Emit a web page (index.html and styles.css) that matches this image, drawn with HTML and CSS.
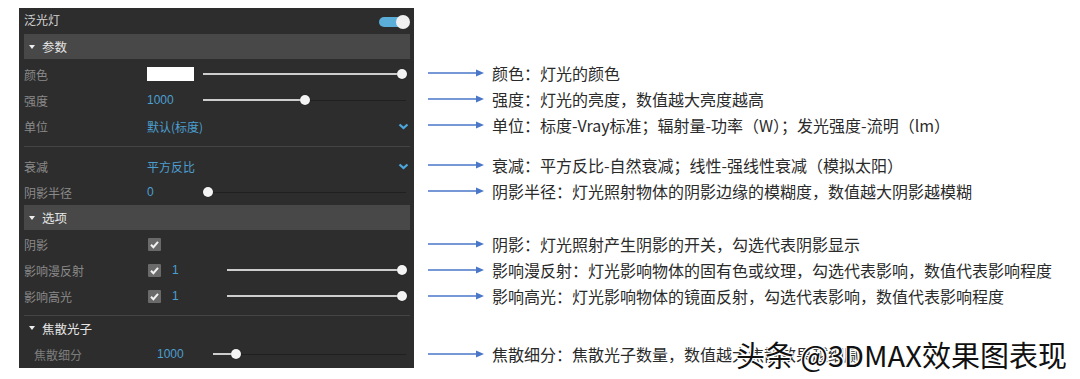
FILE: index.html
```html
<!DOCTYPE html>
<html lang="zh">
<head>
<meta charset="utf-8">
<link rel="stylesheet" href="styles.css">
</head>
<body>
<div class="page">
  <div class="panel">
    <div class="title-row">
      <span class="title">泛光灯</span>
      <span class="toggle"><span class="toggle-thumb"></span></span>
    </div>

    <div class="section-head"><span class="tri"></span>参数</div>
    <div class="rows first">
      <div class="row">
        <span class="label">颜色</span>
        <span class="swatch"></span>
        <div class="slider"><span class="fill" style="width:199px"></span><span class="thumb"></span><span class="rest"></span></div>
      </div>
      <div class="row">
        <span class="label">强度</span>
        <span class="value">1000</span>
        <div class="slider"><span class="fill" style="width:102px"></span><span class="thumb"></span><span class="rest"></span></div>
      </div>
      <div class="row">
        <span class="label">单位</span>
        <span class="value grow">默认(标度)</span>
        <svg class="chev" width="11" height="7" viewBox="0 0 11 7"><polyline points="1.5,1.5 5.5,5 9.5,1.5" fill="none" stroke="#4ba7dc" stroke-width="2.3"/></svg>
      </div>
      <div class="sep top"></div>
      <div class="row">
        <span class="label">衰减</span>
        <span class="value grow">平方反比</span>
        <svg class="chev" width="11" height="7" viewBox="0 0 11 7"><polyline points="1.5,1.5 5.5,5 9.5,1.5" fill="none" stroke="#4ba7dc" stroke-width="2.3"/></svg>
      </div>
      <div class="row">
        <span class="label">阴影半径</span>
        <span class="value">0</span>
        <div class="slider"><span class="fill" style="width:5px"></span><span class="thumb"></span><span class="rest"></span></div>
      </div>
    </div>

    <div class="section-head"><span class="tri"></span>选项</div>
    <div class="rows second">
      <div class="row">
        <span class="label">阴影</span>
        <span class="check"><svg width="13" height="13" viewBox="0 0 13 13"><polyline points="3,6.8 5.4,9.2 10,3.8" fill="none" stroke="#f2f2f2" stroke-width="2"/></svg></span>
      </div>
      <div class="row">
        <span class="label">影响漫反射</span>
        <span class="check"><svg width="13" height="13" viewBox="0 0 13 13"><polyline points="3,6.8 5.4,9.2 10,3.8" fill="none" stroke="#f2f2f2" stroke-width="2"/></svg></span>
        <span class="value short">1</span>
        <div class="slider"><span class="fill" style="width:175px"></span><span class="thumb"></span><span class="rest"></span></div>
      </div>
      <div class="row">
        <span class="label">影响高光</span>
        <span class="check"><svg width="13" height="13" viewBox="0 0 13 13"><polyline points="3,6.8 5.4,9.2 10,3.8" fill="none" stroke="#f2f2f2" stroke-width="2"/></svg></span>
        <span class="value short">1</span>
        <div class="slider"><span class="fill" style="width:175px"></span><span class="thumb"></span><span class="rest"></span></div>
      </div>
      <div class="sep bottom"></div>
    </div>

    <div class="section-head plain"><span class="tri"></span>焦散光子</div>
    <div class="rows third">
      <div class="row">
        <span class="label">焦散细分</span>
        <span class="value">1000</span>
        <div class="slider"><span class="fill" style="width:23px"></span><span class="thumb"></span><span class="rest"></span></div>
      </div>
    </div>
  </div>

  <div class="notes">
    <div class="note"><svg class="arrow" width="56" height="10" viewBox="0 0 56 10"><line x1="0" y1="5" x2="50" y2="5" stroke="#4a76c8" stroke-width="1.3"/><polygon points="48,1.5 56,5 48,8.5" fill="#4a76c8"/></svg><span>颜色：灯光的颜色</span></div>
    <div class="note"><svg class="arrow" width="56" height="10" viewBox="0 0 56 10"><line x1="0" y1="5" x2="50" y2="5" stroke="#4a76c8" stroke-width="1.3"/><polygon points="48,1.5 56,5 48,8.5" fill="#4a76c8"/></svg><span>强度：灯光的亮度，数值越大亮度越高</span></div>
    <div class="note"><svg class="arrow" width="56" height="10" viewBox="0 0 56 10"><line x1="0" y1="5" x2="50" y2="5" stroke="#4a76c8" stroke-width="1.3"/><polygon points="48,1.5 56,5 48,8.5" fill="#4a76c8"/></svg><span>单位：标度-Vray标准；辐射量-功率（W）；发光强度-流明（lm）</span></div>
    <div class="note gap-a"><svg class="arrow" width="56" height="10" viewBox="0 0 56 10"><line x1="0" y1="5" x2="50" y2="5" stroke="#4a76c8" stroke-width="1.3"/><polygon points="48,1.5 56,5 48,8.5" fill="#4a76c8"/></svg><span>衰减：平方反比-自然衰减；线性-强线性衰减（模拟太阳）</span></div>
    <div class="note"><svg class="arrow" width="56" height="10" viewBox="0 0 56 10"><line x1="0" y1="5" x2="50" y2="5" stroke="#4a76c8" stroke-width="1.3"/><polygon points="48,1.5 56,5 48,8.5" fill="#4a76c8"/></svg><span>阴影半径：灯光照射物体的阴影边缘的模糊度，数值越大阴影越模糊</span></div>
    <div class="note gap-b"><svg class="arrow" width="56" height="10" viewBox="0 0 56 10"><line x1="0" y1="5" x2="50" y2="5" stroke="#4a76c8" stroke-width="1.3"/><polygon points="48,1.5 56,5 48,8.5" fill="#4a76c8"/></svg><span>阴影：灯光照射产生阴影的开关，勾选代表阴影显示</span></div>
    <div class="note"><svg class="arrow" width="56" height="10" viewBox="0 0 56 10"><line x1="0" y1="5" x2="50" y2="5" stroke="#4a76c8" stroke-width="1.3"/><polygon points="48,1.5 56,5 48,8.5" fill="#4a76c8"/></svg><span>影响漫反射：灯光影响物体的固有色或纹理，勾选代表影响，数值代表影响程度</span></div>
    <div class="note"><svg class="arrow" width="56" height="10" viewBox="0 0 56 10"><line x1="0" y1="5" x2="50" y2="5" stroke="#4a76c8" stroke-width="1.3"/><polygon points="48,1.5 56,5 48,8.5" fill="#4a76c8"/></svg><span>影响高光：灯光影响物体的镜面反射，勾选代表影响，数值代表影响程度</span></div>
    <div class="note gap-c"><svg class="arrow" width="56" height="10" viewBox="0 0 56 10"><line x1="0" y1="5" x2="50" y2="5" stroke="#4a76c8" stroke-width="1.3"/><polygon points="48,1.5 56,5 48,8.5" fill="#4a76c8"/></svg><span>焦散细分：焦散光子数量，数值越大焦散效果越细腻</span></div>
  </div>
</div>
<div class="watermark">头条 @3DMAX效果图表现</div>
</body>
</html>
```

FILE: styles.css
```css
html, body {
  margin: 0;
  padding: 0;
}
body {
  width: 1080px;
  height: 379px;
  overflow: hidden;
  background: #ffffff;
  position: relative;
  font-family: "Noto Sans CJK SC", "Liberation Sans", sans-serif;
}
.page {
  display: flex;
  align-items: flex-start;
  padding: 8px 0 0 19px;
}

/* ---------- panel ---------- */
.panel {
  width: 395px;
  height: 360px;
  box-sizing: border-box;
  padding: 0 4px 0 5px;
  background: #2d2d2d;
  flex: none;
}
.title-row {
  height: 24px;
  display: flex;
  align-items: center;
  justify-content: space-between;
}
.title {
  color: #d4d4d4;
  font-size: 12px;
  line-height: 1;
}
.toggle {
  width: 28px;
  height: 10px;
  border-radius: 5px;
  background: #5aaed8;
  margin: 4px 3px 0 0;
  display: flex;
  align-items: center;
  justify-content: flex-end;
}
.toggle-thumb {
  width: 14px;
  height: 14px;
  border-radius: 50%;
  background: #f0f0f0;
  margin-right: -3px;
  flex: none;
}
.section-head {
  height: 25px;
  margin-top: 2px;
  background: #484848;
  display: flex;
  align-items: center;
  padding-left: 5px;
  color: #e6e6e6;
  font-size: 12.5px;
}
.section-head.plain {
  background: transparent;
  height: 24px;
  margin-top: 0;
}
.tri {
  width: 0;
  height: 0;
  border-left: 3.5px solid transparent;
  border-right: 3.5px solid transparent;
  border-top: 4px solid #eeeeee;
  margin-right: 7px;
}
.rows.first {
  padding-top: 2px;
}
.rows.first + .section-head {
  margin-top: 0;
}
.rows.second {
  padding-top: 1px;
}
.rows.third {
  padding-top: 1px;
  padding-left: 10px;
}
.row {
  height: 26px;
  display: flex;
  align-items: center;
  padding-right: 4px;
}
.label {
  width: 123px;
  flex: none;
  color: #8a8a8a;
  font-size: 12px;
}
.rows.third .label {
  color: #7d7d7d;
}
.value {
  width: 56px;
  flex: none;
  color: #4c9fd0;
  font-family: "Liberation Sans", "Noto Sans CJK SC", sans-serif;
  font-size: 12px;
}
.value.grow {
  flex: 1;
  width: auto;
  font-family: "Noto Sans CJK SC", sans-serif;
}
.value.short {
  width: 55px;
}
.chev {
  margin-right: -3px;
  margin-top: 1px;
  flex: none;
}
.swatch {
  width: 47px;
  height: 14px;
  background: #ffffff;
  margin-right: 9px;
  flex: none;
}
.check {
  width: 13px;
  height: 13px;
  background: #6a6a6a;
  border-radius: 1px;
  margin: 0 11px 0 1px;
  display: flex;
  flex: none;
}
.slider {
  flex: 1;
  height: 12px;
  display: flex;
  align-items: center;
}
.fill {
  height: 2px;
  background: #cdcdcd;
  flex: none;
}
.thumb {
  width: 10px;
  height: 10px;
  border-radius: 50%;
  background: #f4f4f4;
  box-shadow: 0 0 1px rgba(0,0,0,0.6);
  margin: 0 -5px;
  flex: none;
  position: relative;
  z-index: 1;
}
.rest {
  flex: 1;
  height: 1px;
  background: #202020;
}
.sep {
  height: 1px;
  background: #444444;
}
.sep.top {
  margin: 7px 0 6px;
}
.sep.bottom {
  margin-top: 6px;
}

/* ---------- notes ---------- */
.notes {
  margin-left: 14px;
  padding-top: 53px;
  display: flex;
  flex-direction: column;
}
.note {
  height: 26px;
  display: flex;
  align-items: center;
  font-size: 16px;
  color: #2a2a2a;
  white-space: nowrap;
}
.note:first-child {
  margin-top: -1px;
}
.arrow {
  margin-right: 8px;
  flex: none;
}
.note.gap-a {
  margin-top: 14px;
}
.note.gap-b {
  margin-top: 27px;
}
.note.gap-c {
  margin-top: 32px;
}

/* ---------- watermark overlay ---------- */
.watermark {
  position: absolute;
  left: 736px;
  top: 334px;
  font-size: 29px;
  line-height: 40px;
  color: #111111;
  white-space: nowrap;
  text-shadow: 1px 1px 0 #fff, -1px -1px 0 #fff, 1px -1px 0 #fff, -1px 1px 0 #fff, 0 0 3px rgba(255,255,255,0.9);
}
```
